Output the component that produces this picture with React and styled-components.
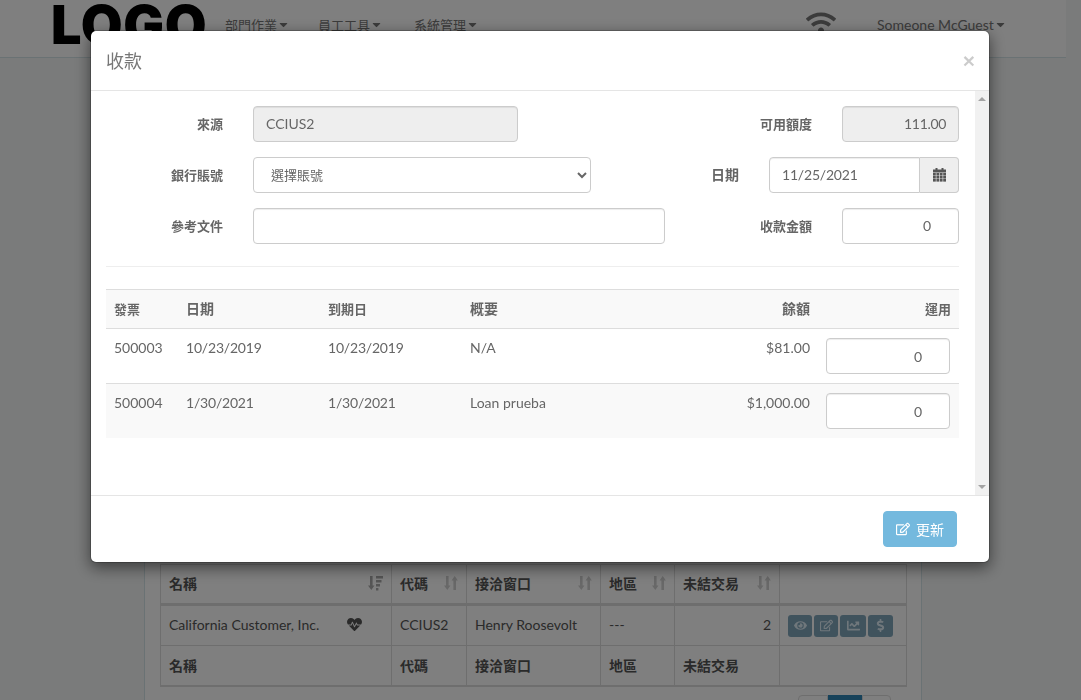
import React from 'react';
import styled, { createGlobalStyle } from 'styled-components';
import { FaEye, FaRegEdit, FaChartLine, FaDollarSign, FaHeartbeat, FaWifi, FaCaretDown } from 'react-icons/fa';

const Global = createGlobalStyle`
  html, body { margin: 0; height: 700px; overflow: hidden; background: #f5f7f7; }
  body { font-family: Lato, "Noto Sans CJK TC", sans-serif; font-size: 14px; color: #666; }
  * { box-sizing: border-box; }
`;

const Page = styled.div`
  height: 700px;
  overflow: hidden;
  padding-right: 15px;
`;
const Nav = styled.nav`
  display: flex;
  align-items: center;
  height: 58px;
  background: #fff;
  border-bottom: 1px solid #d4e4e8;
  overflow: hidden;
  padding-left: 51px;
`;
const Logo = styled.div`
  font-family: Inter, sans-serif;
  font-weight: 900;
  font-size: 54px;
  line-height: 50px;
  letter-spacing: 0.7px;
  width: 174px;
  color: #000;
  margin-top: -8px;
`;
const Menu = styled.a`
  display: flex;
  align-items: center;
  width: ${p => p.$w}px;
  font-size: 13px;
  color: #777;
  padding-bottom: 8px;
`;
const Wifi = styled.div`
  display: flex;
  margin: -2px 0 0 ${p => p.$m}px;
  color: #777;
  font-size: 30px;
  width: 71px;
  height: 40px;
`;
const User = styled(Menu)`
  width: auto;
  font-size: 14px;
  color: #777;
`;

const Panel = styled.main`
  width: 778px;
  margin: 0 auto;
  padding: 506px 15px 0;
  height: 642px;
  background: #fff;
  border-left: 1px solid #d4e4e8;
  border-right: 1px solid #d4e4e8;
`;
const ListTable = styled.table`
  width: 746px;
  table-layout: fixed;
  border-collapse: collapse;
  border: 1px solid #ddd;
  border-bottom-width: 2px;
  color: #555;
`;
const ListHead = styled.th`
  height: 40px;
  padding: 0 8px 2px;
  border: 1px solid #ddd;
  border-bottom-width: 3px;
  text-align: left;
  font-size: 14px;
  color: #555;
`;
const ListFoot = styled(ListHead)`
  padding-bottom: 0;
  border-bottom-width: 2px;
`;
const ListCell = styled.td`
  height: 41px;
  padding: 0 8px 2px;
  border: 1px solid #ddd;
  text-align: ${p => p.$align || 'left'};
`;
const HeadInner = styled.div`
  display: flex;
  justify-content: space-between;
  align-items: center;
`;
const SortIcon = styled.svg`
  flex: none;
  fill: ${p => (p.$active ? '#aaa' : '#d0d0d0')};
`;
const NameInner = styled.div`
  display: flex;
  justify-content: space-between;
  align-items: center;
  padding-right: 21px;
  svg { font-size: 15px; color: #555; }
`;
const Actions = styled.div`
  display: flex;
  gap: 2px;
  margin-top: 2px;
`;
const ActionBtn = styled.button`
  display: flex;
  align-items: center;
  justify-content: center;
  width: ${p => p.$w}px;
  height: 22px;
  padding: 0;
  border: 0;
  border-radius: 3px;
  background: #80a6bb;
  color: #dfeef7;
  font-size: 13px;
`;
const Pager = styled.div`
  display: flex;
  justify-content: flex-end;
  margin: 8px 15px 0 0;
`;
const PageItem = styled.span`
  width: ${p => p.$w}px;
  padding: 6px 0;
  text-align: center;
  background: ${p => (p.$active ? '#2f85b5' : '#fff')};
  color: ${p => (p.$active ? '#fff' : '#666')};
  border: 1px solid ${p => (p.$active ? '#2f85b5' : '#ddd')};
  border-radius: ${p => p.$r || '0'};
`;

const Overlay = styled.div`
  position: fixed;
  inset: 0;
  background: rgba(0, 0, 0, .5);
`;
const Dialog = styled.div`
  width: 900px;
  height: 533px;
  margin: 30px 0 0 90px;
  background: #fff;
  border: 1px solid rgba(0, 0, 0, .2);
  border-radius: 6px;
  box-shadow: 0 5px 15px rgba(0, 0, 0, .5);
  background-clip: padding-box;
  display: flex;
  flex-direction: column;
`;
const Header = styled.header`
  display: flex;
  justify-content: space-between;
  align-items: center;
  height: 60px;
  padding: 0 14px 0 15px;
  border-bottom: 1px solid #e5e5e5;
`;
const Title = styled.h4`
  margin: 0;
  padding-bottom: 2px;
  font-size: 18px;
  font-weight: 400;
  color: #777;
`;
const Close = styled.span`
  font-size: 21px;
  font-weight: 700;
  color: #000;
  opacity: .2;
  font-family: "Liberation Sans", sans-serif;
`;
const Middle = styled.div`
  display: flex;
  height: 404px;
`;
const Body = styled.div`
  flex: 1;
  padding: 15px 16px 15px 15px;
`;
const Track = styled.div`
  display: flex;
  flex-direction: column;
  justify-content: space-between;
  align-items: center;
  width: 14px;
  padding: 6px 0;
  background: #f1f1f1;
`;
const Arrow = styled.span`
  width: 0;
  height: 0;
  border-left: 4px solid transparent;
  border-right: 4px solid transparent;
  ${p => (p.$down ? 'border-top: 4px solid #a3a3a3;' : 'border-bottom: 4px solid #a3a3a3;')}
`;
const FormRow = styled.div`
  display: flex;
  justify-content: space-between;
  margin-bottom: 15px;
`;
const FieldGroup = styled.div`
  display: flex;
  align-items: center;
  gap: 30px;
`;
const Label = styled.label`
  width: ${p => p.$w}px;
  padding-bottom: 2px;
  text-align: right;
  font-weight: 700;
  font-size: ${p => p.$size || 13}px;
  color: #666;
`;
const Input = styled.input`
  width: ${p => p.$w}px;
  height: 36px;
  padding: 0 ${p => p.$pr || 12}px ${p => p.$pb ?? 2}px 12px;
  border: 1px solid #ccc;
  border-radius: 4px;
  background: ${p => (p.disabled ? '#eee' : '#fff')};
  font: 14px Lato, "Noto Sans CJK TC", sans-serif;
  letter-spacing: ${p => p.$track || 0}px;
  color: #666;
  text-align: ${p => p.$align || 'left'};
  box-shadow: inset 0 1px 1px rgba(0, 0, 0, .075);
  opacity: 1;
  -webkit-text-fill-color: #666;
`;
const Select = styled.select`
  width: 338px;
  height: 36px;
  padding: 0 0 0 13px;
  border: 1px solid #ccc;
  border-radius: 4px;
  background: #fff;
  font: 13px Lato, "Noto Sans CJK TC", sans-serif;
  color: #666;
`;
const InputGroup = styled.div`
  display: flex;
  width: 190px;
`;
const DateInput = styled(Input)`
  flex: 1;
  min-width: 0;
  border-radius: 4px 0 0 4px;
`;
const Addon = styled.span`
  display: flex;
  align-items: center;
  justify-content: center;
  width: 39px;
  border: 1px solid #ccc;
  border-left: 0;
  border-radius: 0 4px 4px 0;
  background: #eee;
  color: #555;
`;
const Divider = styled.hr`
  margin: 22px 0 22px;
  border: 0;
  border-top: 1px solid #eee;
`;
const InvoiceTable = styled.table`
  width: 853px;
  table-layout: fixed;
  border-collapse: collapse;
`;
const Th = styled.th`
  height: 39px;
  padding: 0 8px 2px;
  background: #f9f9f9;
  border-top: 1px solid #ddd;
  border-bottom: 1px solid #ddd;
  font-size: ${p => p.$size || 13}px;
  font-weight: 700;
  color: #666;
  text-align: ${p => p.$align || 'left'};
`;
const Row = styled.tr`
  background: ${p => (p.$odd ? '#f9f9f9' : '#fff')};
  border-bottom: ${p => (p.$last ? 0 : '1px solid #ddd')};
`;
const Td = styled.td`
  height: ${p => p.$h || 55}px;
  padding: 10px 8px 0;
  vertical-align: top;
  text-align: ${p => p.$align || 'left'};
  color: #666;
  line-height: 18px;
  letter-spacing: ${p => p.$track || 0}px;
`;
const ApplyCell = styled(Td)`
  padding: 9px 9px 0 8px;
`;
const Footer = styled.footer`
  display: flex;
  justify-content: flex-end;
  padding: 15px 32px 0 0;
  border-top: 1px solid #e5e5e5;
  flex: 1;
`;
const Update = styled.button`
  display: flex;
  align-items: center;
  justify-content: center;
  gap: 6px;
  width: 74px;
  height: 36px;
  padding: 0;
  border: 1px solid #74b9de;
  border-radius: 4px;
  background: #74b9de;
  color: #fff;
  font: 14px Lato, "Noto Sans CJK TC", sans-serif;
`;

const CalendarIcon = () => (
  <svg width="13" height="14" viewBox="0 0 13 14" fill="#555" aria-hidden="true">
    <rect x="2.5" y="0" width="2" height="3" />
    <rect x="8.5" y="0" width="2" height="3" />
    <rect x="0" y="1.5" width="13" height="3" />
    {[5, 8, 11].map(y => [0, 3.4, 6.8, 10.2].map(x => (
      <rect key={`${x}-${y}`} x={x} y={y} width="2.8" height="2.6" />
    )))}
  </svg>
);

const Sort = ({ active }) => active ? (
  <SortIcon $active width="15" height="16" viewBox="0 0 15 16" aria-hidden="true">
    <path d="M2 1h2.6v9.5H6.5L3.3 15 0 10.5h2z" />
    <path d="M8 1h7v2.4H8zM8 5h5.5v2.4H8zM8 9h4v2.4H8zM8 13h2.4v2.4H8z" />
  </SortIcon>
) : (
  <SortIcon width="14" height="16" viewBox="0 0 14 16" aria-hidden="true">
    <path d="M2 1h2.6v9.5H6.5L3.3 15 0 10.5h2z" />
    <path d="M9.4 15H12V5.5h1.9L10.7 1 7.5 5.5h1.9z" />
  </SortIcon>
);

export default function App() {
  return (
    <>
      <Global />
      <Page>
        <Nav>
          <Logo>LOGO</Logo>
          <Menu $w={93}>部門作業<FaCaretDown size={13} /></Menu>
          <Menu $w={96}>員工工具<FaCaretDown size={13} /></Menu>
          <Menu $w={78}>系統管理<FaCaretDown size={13} /></Menu>
          <Wifi $m={314}><FaWifi /></Wifi>
          <User>Someone McGuest<FaCaretDown size={13} /></User>
        </Nav>
        <Panel>
          <ListTable>
            <colgroup>
              <col width="231" /><col width="75" /><col width="134" /><col width="74" /><col width="105" /><col width="127" />
            </colgroup>
            <thead>
              <tr>
                <ListHead><HeadInner>名稱<Sort active /></HeadInner></ListHead>
                <ListHead><HeadInner>代碼<Sort /></HeadInner></ListHead>
                <ListHead><HeadInner>接洽窗口<Sort /></HeadInner></ListHead>
                <ListHead><HeadInner>地區<Sort /></HeadInner></ListHead>
                <ListHead><HeadInner>未結交易<Sort /></HeadInner></ListHead>
                <ListHead />
              </tr>
            </thead>
            <tbody>
              <tr>
                <ListCell><NameInner>California Customer, Inc.<FaHeartbeat /></NameInner></ListCell>
                <ListCell>CCIUS2</ListCell>
                <ListCell>Henry Roosevolt</ListCell>
                <ListCell>---</ListCell>
                <ListCell $align="right">2</ListCell>
                <ListCell>
                  <Actions>
                    <ActionBtn $w={24}><FaEye /></ActionBtn>
                    <ActionBtn $w={24}><FaRegEdit /></ActionBtn>
                    <ActionBtn $w={26}><FaChartLine /></ActionBtn>
                    <ActionBtn $w={25}><FaDollarSign /></ActionBtn>
                  </Actions>
                </ListCell>
              </tr>
            </tbody>
            <tfoot>
              <tr>
                <ListFoot>名稱</ListFoot>
                <ListFoot>代碼</ListFoot>
                <ListFoot>接洽窗口</ListFoot>
                <ListFoot>地區</ListFoot>
                <ListFoot>未結交易</ListFoot>
                <ListFoot />
              </tr>
            </tfoot>
          </ListTable>
          <Pager>
            <PageItem $w={30} $r="4px 0 0 4px">«</PageItem>
            <PageItem $w={34} $active>1</PageItem>
            <PageItem $w={29} $r="0 4px 4px 0">»</PageItem>
          </Pager>
        </Panel>
      </Page>
      <Overlay>
        <Dialog>
          <Header>
            <Title>收款</Title>
            <Close>×</Close>
          </Header>
          <Middle>
            <Body>
              <FormRow>
                <FieldGroup>
                  <Label $w={117}>來源</Label>
                  <Input $w={265} disabled value="CCIUS2" readOnly />
                </FieldGroup>
                <FieldGroup>
                  <Label $w={80}>可用額度</Label>
                  <Input $w={117} disabled value="111.00" readOnly $align="right" $track={-0.33} />
                </FieldGroup>
              </FormRow>
              <FormRow>
                <FieldGroup>
                  <Label $w={117}>銀行賬號</Label>
                  <Select defaultValue="">
                    <option value="">選擇賬號</option>
                  </Select>
                </FieldGroup>
                <FieldGroup>
                  <Label $w={80} $size={14}>日期</Label>
                  <InputGroup>
                    <DateInput value="11/25/2021" readOnly $track={-0.2} />
                    <Addon><CalendarIcon /></Addon>
                  </InputGroup>
                </FieldGroup>
              </FormRow>
              <FormRow>
                <FieldGroup>
                  <Label $w={117}>參考文件</Label>
                  <Input $w={412} readOnly value="" />
                </FieldGroup>
                <FieldGroup>
                  <Label $w={80}>收款金額</Label>
                  <Input $w={117} value="0" readOnly $align="right" $pr={27} />
                </FieldGroup>
              </FormRow>
              <Divider />
              <InvoiceTable>
                <colgroup>
                  <col width="72" /><col width="142" /><col width="142" /><col width="200" /><col width="156" /><col width="141" />
                </colgroup>
                <thead>
                  <tr>
                    <Th>發票</Th>
                    <Th $size={14}>日期</Th>
                    <Th>到期日</Th>
                    <Th $size={14}>概要</Th>
                    <Th $size={14} $align="right">餘額</Th>
                    <Th $align="right">運用</Th>
                  </tr>
                </thead>
                <tbody>
                  <Row>
                    <Td>500003</Td>
                    <Td $track={-0.2}>10/23/2019</Td>
                    <Td $track={-0.2}>10/23/2019</Td>
                    <Td>N/A</Td>
                    <Td $align="right">$81.00</Td>
                    <ApplyCell><Input $w={124} value="0" readOnly $align="right" $pr={27} $pb={0} /></ApplyCell>
                  </Row>
                  <Row $odd $last>
                    <Td $h={54}>500004</Td>
                    <Td $h={54} $track={-0.2}>1/30/2021</Td>
                    <Td $h={54} $track={-0.2}>1/30/2021</Td>
                    <Td $h={54}>Loan prueba</Td>
                    <Td $h={54} $align="right">$1,000.00</Td>
                    <ApplyCell $h={54}><Input $w={124} value="0" readOnly $align="right" $pr={27} $pb={0} /></ApplyCell>
                  </Row>
                </tbody>
              </InvoiceTable>
            </Body>
            <Track><Arrow /><Arrow $down /></Track>
          </Middle>
          <Footer>
            <Update><FaRegEdit />更新</Update>
          </Footer>
        </Dialog>
      </Overlay>
    </>
  );
}
